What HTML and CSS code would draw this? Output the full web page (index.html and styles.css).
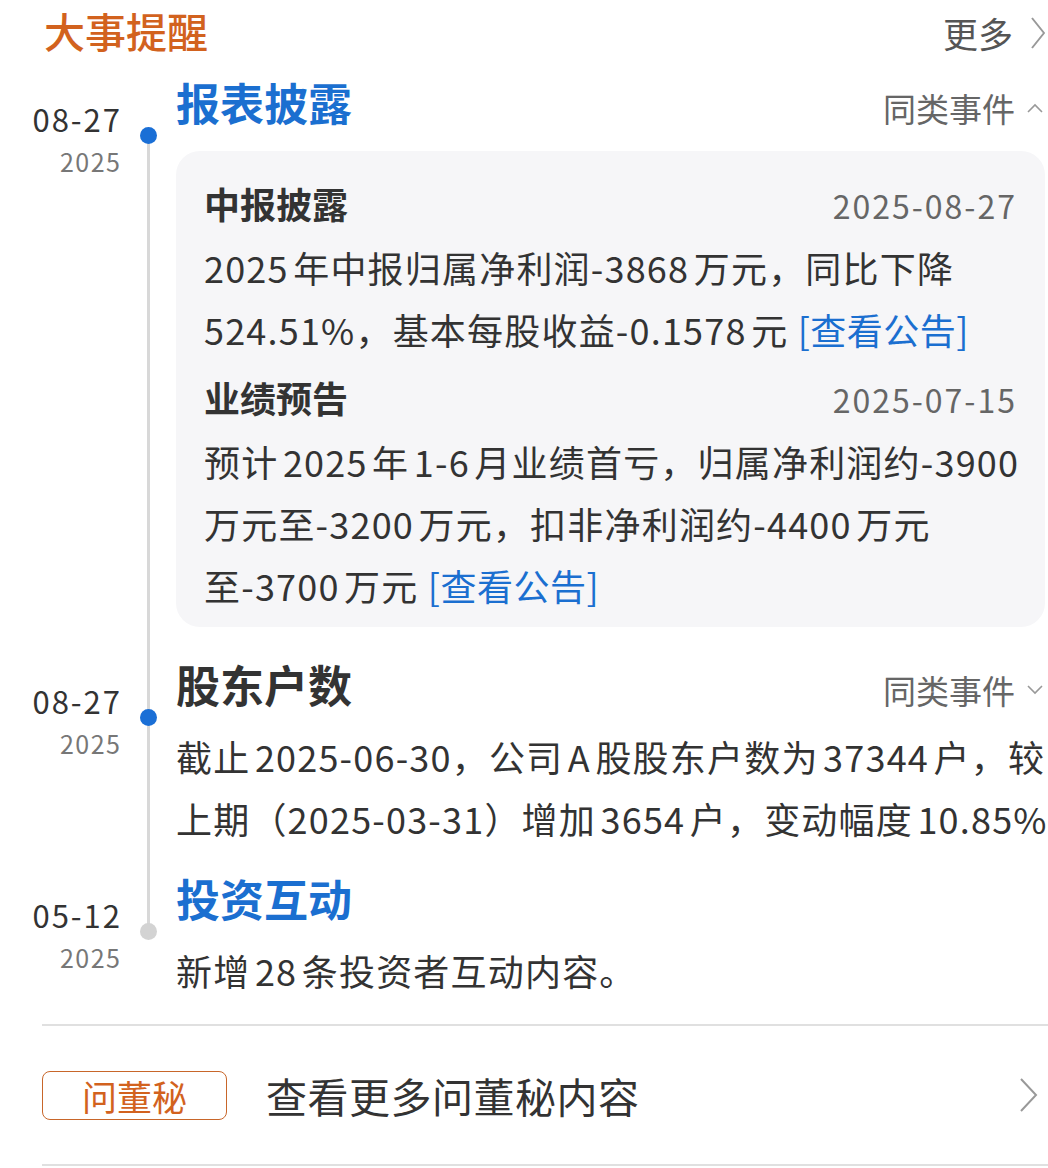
FILE: index.html
```html
<!DOCTYPE html>
<html lang="zh-CN">
<head>
<meta charset="utf-8">
<link rel="stylesheet" href="styles.css">
</head>
<body>
<div class="page">
  <header class="head">
    <h1 class="head-title">大事提醒</h1>
    <a class="head-more">更多<svg class="chev-right" viewBox="0 0 14 32" width="14" height="32"><path d="M1 1 L13 16 L1 31" fill="none" stroke="#999" stroke-width="2"/></svg></a>
  </header>

  <div class="timeline">
    <section class="item first">
      <div class="date"><div class="md">08-27</div><div class="yr">2025</div></div>
      <div class="axis"><span class="dot"></span></div>
      <div class="content">
        <div class="item-head">
          <h2 class="item-title blue">报表披露</h2>
          <span class="similar">同类事件<svg class="chev-small" viewBox="0 0 16 10" width="16" height="10"><path d="M1 9 L8 2 L15 9" fill="none" stroke="#999" stroke-width="1.6"/></svg></span>
        </div>
        <div class="card">
          <div class="card-row"><h3 class="card-title">中报披露</h3><span class="card-date">2025-08-27</span></div>
          <p class="card-text">2025年中报归属净利润-3868万元，同比下降<br>524.51%，基本每股收益-0.1578元 <a class="link">[查看公告]</a></p>
          <div class="card-row second"><h3 class="card-title">业绩预告</h3><span class="card-date">2025-07-15</span></div>
          <p class="card-text">预计2025年1-6月业绩首亏，归属净利润约-3900<br>万元至-3200万元，扣非净利润约-4400万元<br>至-3700万元 <a class="link">[查看公告]</a></p>
        </div>
      </div>
    </section>

    <section class="item mid">
      <div class="date"><div class="md">08-27</div><div class="yr">2025</div></div>
      <div class="axis"><span class="dot"></span></div>
      <div class="content">
        <div class="item-head">
          <h2 class="item-title">股东户数</h2>
          <span class="similar">同类事件<svg class="chev-small" viewBox="0 0 16 10" width="16" height="10"><path d="M1 1 L8 8 L15 1" fill="none" stroke="#999" stroke-width="1.6"/></svg></span>
        </div>
        <p class="body-text">截止2025-06-30，公司A股股东户数为37344户，较<br>上期（2025-03-31）增加3654户，变动幅度10.85%</p>
      </div>
    </section>

    <section class="item last">
      <div class="date"><div class="md">05-12</div><div class="yr">2025</div></div>
      <div class="axis"><span class="dot grey"></span></div>
      <div class="content">
        <div class="item-head">
          <h2 class="item-title blue">投资互动</h2>
        </div>
        <p class="body-text">新增28条投资者互动内容。</p>
      </div>
    </section>
  </div>

  <div class="dm-row">
    <span class="dm-tag">问董秘</span>
    <span class="dm-text">查看更多问董秘内容</span>
    <svg class="chev-right dm-chev" viewBox="0 0 18 34" width="18" height="34"><path d="M1 1 L16 17 L1 33" fill="none" stroke="#999" stroke-width="2"/></svg>
  </div>
</div>
</body>
</html>
```
FILE: styles.css
```css
* { box-sizing: border-box; }
html, body { margin: 0; padding: 0; background: #fff; }
body {
  font-family: "Noto Sans CJK SC", "Noto Sans", sans-serif;
  color: #333;
  text-autospace: normal;
}
h1, h2, h3, p { margin: 0; font-weight: normal; }

.page { width: 1048px; }

.head {
  display: flex;
  justify-content: space-between;
  align-items: flex-start;
  padding: 0 3px 0 44px;
  height: 73px;
}
.head-title {
  font-size: 41px;
  line-height: 60px;
  color: #d2621e;
  font-weight: 500;
}
.head-more {
  display: flex;
  align-items: center;
  gap: 18px;
  font-size: 35px;
  line-height: 50px;
  color: #555;
  margin-top: 8px;
}

.timeline { display: flex; flex-direction: column; }

.item {
  display: grid;
  grid-template-columns: 120px 56px minmax(0, 1fr);
}
.item.first .content { padding-bottom: 28px; }
.item.mid .content { padding-bottom: 20px; }
.item.last .content { padding-bottom: 23px; }

.date { text-align: right; padding-top: 28px; }
.md { font-size: 31px; line-height: 36px; color: #333; letter-spacing: 2px; margin-right: -2px; }
.yr { font-size: 25px; line-height: 36px; color: #777; margin-top: 6px; letter-spacing: 1.5px; margin-right: -1.5px; }

.axis { position: relative; }
.axis::before {
  content: "";
  position: absolute;
  left: 27px;
  width: 3px;
  background: #d8d8d8;
}
.item.first .axis::before { top: 62px; bottom: 0; }
.item.mid .axis::before { top: 0; bottom: 0; }
.item.last .axis::before { top: 0; height: 61px; }
.dot {
  position: absolute;
  left: 20px;
  top: 54px;
  width: 17px;
  height: 17px;
  border-radius: 50%;
  background: #1a6fd6;
}
.dot.grey { background: #d3d3d3; }

.content { padding-right: 3px; min-width: 0; }
.item-head {
  display: flex;
  justify-content: space-between;
  align-items: center;
  height: 62px;
}
.item-title {
  font-size: 44px;
  line-height: 56px;
  padding-bottom: 5px;
  font-weight: 700;
  color: #333;
}
.item-title.blue { color: #1b6fd0; }
.similar {
  display: flex;
  align-items: center;
  gap: 12px;
  font-size: 33px;
  color: #666;
  margin-top: 8px;
  margin-right: 2px;
}

.card {
  margin-top: 16px;
  background: #f6f6f8;
  border-radius: 24px;
  padding: 23px 30px 11px 28px;
}
.card-row {
  display: flex;
  justify-content: space-between;
  align-items: center;
  height: 62px;
}
.card-row.second { margin-top: 8px; }
.card-title { font-size: 36px; font-weight: 700; color: #333; padding-bottom: 4px; }
.card-date { font-size: 32px; color: #666; letter-spacing: 2px; margin-right: -2px; }
.card-text, .body-text {
  font-size: 36px;
  line-height: 62px;
  color: #333;
  letter-spacing: 1.2px;
  white-space: nowrap;
}
.body-text { margin-top: 8px; }
.link { color: #1b6fd0; letter-spacing: 0.5px; }

.dm-row {
  margin-left: 42px;
  border-top: 2px solid #e0e0e0;
  border-bottom: 2px solid #e0e0e0;
  height: 142px;
  display: flex;
  align-items: center;
  padding-right: 10px;
}
.dm-tag {
  width: 185px;
  height: 49px;
  border: 1.5px solid #c8662a;
  border-radius: 8px;
  color: #d2621e;
  font-size: 35px;
  display: flex;
  align-items: center;
  justify-content: center;
}
.dm-text {
  margin-left: 39px;
  font-size: 41px;
  letter-spacing: 0.5px;
  color: #333;
  flex: 1;
}
.dm-chev { flex: none; }
```
